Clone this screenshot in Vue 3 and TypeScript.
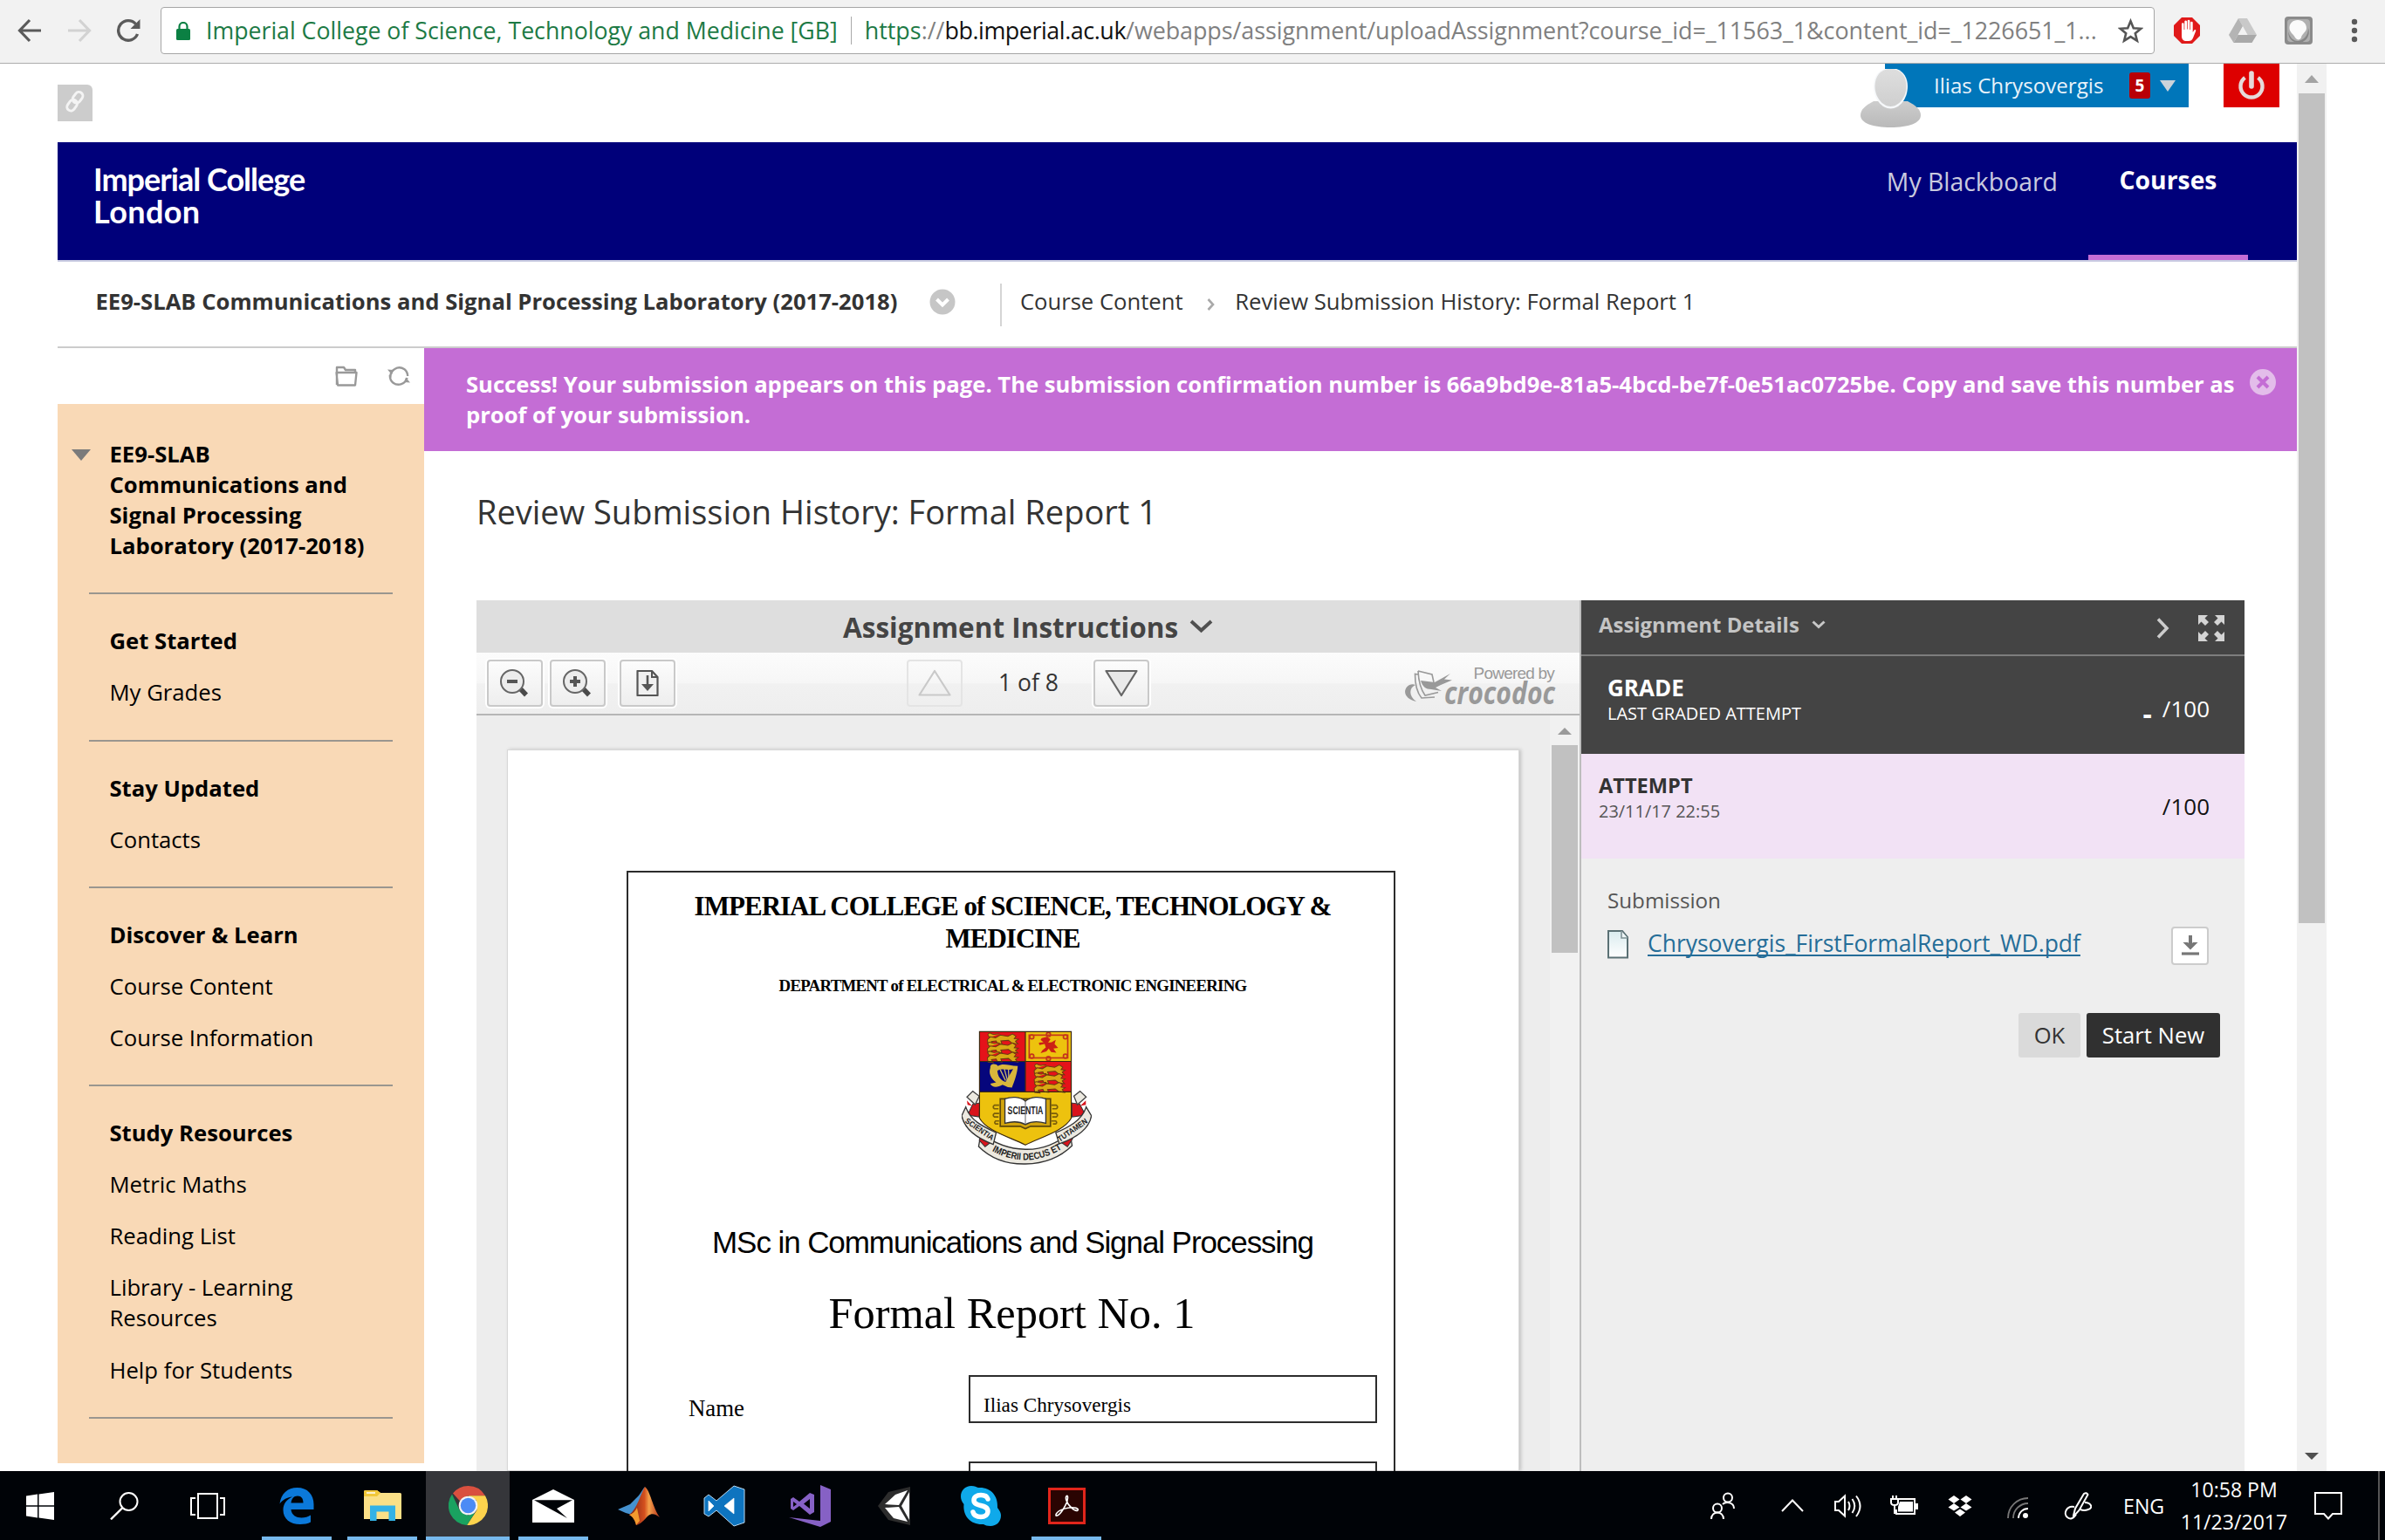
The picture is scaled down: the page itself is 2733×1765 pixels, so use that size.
<script setup lang="ts">
interface MenuSection {
  heading: string
  items: string[]
}

const sections: MenuSection[] = [
  { heading: 'Get Started', items: ['My Grades'] },
  { heading: 'Stay Updated', items: ['Contacts'] },
  { heading: 'Discover & Learn', items: ['Course Content', 'Course Information'] },
  {
    heading: 'Study Resources',
    items: ['Metric Maths', 'Reading List', 'Library - Learning Resources', 'Help for Students'],
  },
]

const lionRows = [0, 1, 2]
</script>

<template>
  <div class="screen">
    <header class="browser">
      <svg class="nav-back" width="28" height="28" viewBox="0 0 28 28"><path d="M27 14H3M14 2L2.500 14L14 26" fill="none" stroke="#5a5a5a" stroke-width="3.200" /></svg>
      <svg class="nav-forward" width="28" height="28" viewBox="0 0 28 28"><path d="M1 14H25M14 2L25.500 14L14 26" fill="none" stroke="#d2d2d2" stroke-width="3.200" /></svg>
      <svg class="nav-reload" width="28" height="28" viewBox="0 0 28 28"><path d="M24.500 18A11.300 11.300 0 1 1 22.500 6.500" fill="none" stroke="#5a5a5a" stroke-width="3.400" /><path d="M27.500 1V12H16.500Z" fill="#5a5a5a" /></svg>
      <div class="omnibox">
        <svg class="lock" width="16" height="21" viewBox="0 0 16 21"><rect y="8" width="16" height="13" rx="1.500" fill="#0b8043" /><path d="M3.500 9V5.500a4.500 4.500 0 0 1 9 0V9" fill="none" stroke="#0b8043" stroke-width="2.200" /></svg>
        <span class="owner">Imperial College of Science, Technology and Medicine [GB]</span>
        <span class="bar"></span>
        <span class="url"><span class="secure">https</span><span class="rest">://</span><span class="host">bb.imperial.ac.uk</span><span class="path">/webapps/assignment/uploadAssignment?course_id=_11563_1&amp;content_id=_1226651_1...</span></span>
        <svg class="star" width="29" height="29" viewBox="0 0 29 29"><path d="M14.500 3.200L17.800 11.200L26.300 11.800L19.800 17.300L21.900 25.700L14.500 21.100L7.100 25.700L9.200 17.300L2.700 11.800L11.200 11.200Z" fill="none" stroke="#555" stroke-width="2.600" /></svg>
      </div>
      <svg class="ext abp" width="30" height="30" viewBox="0 0 30 30">
        <path d="M9 0H21L30 9V21L21 30H9L0 21V9Z" fill="#e01a1a" />
        <path d="M9 17V7.500a1.300 1.300 0 0 1 2.600 0V14h.7V4.500a1.400 1.400 0 0 1 2.700 0V13.500h.7V3.800a1.400 1.400 0 0 1 2.700 0V14h.7V6a1.300 1.300 0 0 1 2.600 0V17l1.500-2.300c1-1.300 2.400-.7 2 .7L22 23.500C21 26 19.500 27 17 27H14.500C11 27 9 25 9 21Z" fill="#fff" />
      </svg>
      <svg class="ext drive" width="32" height="28" viewBox="0 0 32 28">
        <path d="M11 0H21L32 19H21.500Z" fill="#c9c9c9" /><path d="M11 0L16 9L5.500 28L0 19Z" fill="#b4b4b4" /><path d="M10.500 19H32L26.500 28H5.500Z" fill="#a9a9a9" /><path d="M16 9.500L21.300 19H10.700Z" fill="#f2f2f2" />
      </svg>
      <svg class="ext shield" width="32" height="32" viewBox="0 0 32 32">
        <rect width="32" height="32" rx="4" fill="#8b8b8b" /><rect x="3" y="3" width="26" height="26" rx="4" fill="#b0b0b0" />
        <path d="M4 17C6 24 10 28 15 28C22 27 27 22 27 13C30 22 24 30 16 30C9 30 4 25 4 17Z" fill="#868686" />
        <path d="M15 4C21 4 25 8 25 13C25 18 20 19 19 24C18 27 14 27.500 12 24C10 20 5.500 18 5.500 13C5.500 8 9 4 15 4Z" fill="#fbfbfb" />
      </svg>
      <svg class="dots" width="8" height="28" viewBox="0 0 8 28"><circle cx="4" cy="4" r="3.200" fill="#5a5a5a" /><circle cx="4" cy="14" r="3.200" fill="#5a5a5a" /><circle cx="4" cy="24" r="3.200" fill="#5a5a5a" /></svg>
    </header>

    <main class="viewport">
      <div class="document">
        <div class="topstrip">
          <span class="permalink">
            <svg width="40" height="42" viewBox="0 0 40 42"><g fill="none" stroke="#f4f4f4" stroke-width="3" transform="rotate(36 20 19)"><rect x="15.500" y="7" width="9" height="13.500" rx="4.500" /><rect x="15.500" y="18" width="9" height="13.500" rx="4.500" /></g></svg>
          </span>
          <div class="user">
            <svg class="avatar" width="69" height="67" viewBox="0 0 69 67">
              <defs>
                <linearGradient id="face" x1="0" y1="0" x2="0" y2="1"><stop offset="0" stop-color="#dedede" /><stop offset="1" stop-color="#cfcfcf" /></linearGradient>
                <linearGradient id="bust" x1="0" y1="0" x2="0" y2="1"><stop offset="0" stop-color="#cdcdcd" /><stop offset="1" stop-color="#b9b9b9" /></linearGradient>
              </defs>
              <path d="M15 37C5 42 0 47 0 53C0 62 14 67 34.500 67S69 62 69 53C69 47 64 42 54 37Z" fill="url(#bust)" />
              <path d="M34.500 -1C22 -1 15 8 15 20C15 34 24 45.500 34.500 45.500S54 34 54 20C54 8 47 -1 34.500 -1Z" fill="#f6f8fa" />
              <path d="M34.500 0C23 0 16.500 8 16.500 20C16.500 32 25 43 34.500 43S52.500 32 52.500 20C52.500 8 46 0 34.500 0Z" fill="url(#face)" />
            </svg>
            <span class="username">Ilias Chrysovergis</span>
            <span class="badge">5</span>
            <svg class="drop" width="18" height="13" viewBox="0 0 18 13"><path d="M0 0H18L9 13Z" fill="#ccd3da" /></svg>
          </div>
          <span class="power"><svg width="32" height="34" viewBox="0 0 32 34"><path d="M8.500 8A12.500 12.500 0 1 0 23.500 8" fill="none" stroke="#e6d9d9" stroke-width="4.400" /><path d="M16 3V18" stroke="#e6d9d9" stroke-width="5.600" stroke-linecap="round" /></svg></span>
        </div>

        <div class="banner">
          <div class="logo"><span>Imperial College</span><span class="logo-city">London</span></div>
          <nav class="tabs">
            <span class="tab">My Blackboard</span>
            <span class="tab active">Courses</span>
          </nav>
        </div>

        <div class="crumbs">
          <b class="course">EE9-SLAB Communications and Signal Processing Laboratory (2017-2018)</b>
          <svg class="more" width="30" height="30" viewBox="0 0 30 30"><circle cx="15" cy="15" r="14.500" fill="#c6c6c6" /><path d="M8.500 12L15 18.500L21.500 12" fill="none" stroke="#fff" stroke-width="4" /></svg>
          <span class="rule"></span>
          <span class="crumb">Course Content</span>
          <svg class="sep" width="9" height="14" viewBox="0 0 9 14"><path d="M1.500 1L7 7L1.500 13" fill="none" stroke="#a9a9a9" stroke-width="2.600" /></svg>
          <span class="crumb here">Review Submission History: Formal Report 1</span>
        </div>

        <div class="columns">
          <aside class="sidebar">
            <div class="side-tools">
              <svg width="26" height="24" viewBox="0 0 26 24"><path d="M2 22V2H10L12 5H23V8M1.500 8H24.500L23 22.500H3Z" fill="none" stroke="#999" stroke-width="2.400" stroke-linejoin="round" /></svg>
              <svg width="26" height="24" viewBox="0 0 26 24"><path d="M3.500 14A10.200 10.200 0 0 1 19.500 4.300Q23 7 23.200 12M22.500 14A10.200 10.200 0 0 1 6.500 19.700Q2.800 17 2.800 11" fill="none" stroke="#999" stroke-width="2.400" /><path d="M0 4.500L7 5L5 10.500ZM26 19.500L19 19L21 13.500Z" fill="#999" /></svg>
            </div>
            <div class="menu">
              <div class="menu-title">
                <svg class="caret" width="22" height="13" viewBox="0 0 22 13"><path d="M0 0H22L11 13Z" fill="#7b7b7b" /></svg>
                <span class="menu-heading">EE9-SLAB<br />Communications and<br />Signal Processing<br />Laboratory (2017-2018)</span>
              </div>
              <section v-for="section in sections" :key="section.heading" class="menu-section">
                <span class="menu-heading">{{ section.heading }}</span>
                <span v-for="item in section.items" :key="item" class="menu-item">{{ item }}</span>
              </section>
            </div>
          </aside>

          <div class="content">
            <div class="alert">
              <p>Success! Your submission appears on this page. The submission confirmation number is 66a9bd9e-81a5-4bcd-be7f-0e51ac0725be. Copy and save this number as<br />proof of your submission.</p>
              <svg class="dismiss" width="32" height="32" viewBox="0 0 32 32"><circle cx="16" cy="16" r="15" fill="#e3bdea" /><path d="M10 10L22 22M22 10L10 22" stroke="#c46dd5" stroke-width="4" /></svg>
            </div>
            <h1>Review Submission History: Formal Report 1</h1>

            <div class="grader">
              <div class="viewer">
                <div class="viewer-head">
                  <span>Assignment Instructions</span>
                  <svg width="27" height="16" viewBox="0 0 27 16"><path d="M2 2L13.500 12.500L25 2" fill="none" stroke="#505050" stroke-width="4" /></svg>
                </div>
                <div class="toolbar">
                  <span class="tool zoom-out">
                    <svg width="34" height="34" viewBox="0 0 34 34"><path d="M22 22L30 30.500" stroke="#4a4a4a" stroke-width="5.500" /><circle cx="14" cy="15" r="13" fill="#ececec" stroke="#666" stroke-width="2" /><path d="M8 15H20" stroke="#555" stroke-width="4" /></svg>
                  </span>
                  <span class="tool zoom-in">
                    <svg width="34" height="34" viewBox="0 0 34 34"><path d="M22 22L30 30.500" stroke="#4a4a4a" stroke-width="5.500" /><circle cx="14" cy="15" r="13" fill="#ececec" stroke="#666" stroke-width="2" /><path d="M8 15H20M14 9V21" stroke="#555" stroke-width="4" /></svg>
                  </span>
                  <span class="tool save">
                    <svg width="26" height="30" viewBox="0 0 26 30"><path d="M1.500 1H18L24.500 8V29H1.500Z" fill="#f0f0f0" stroke="#555" stroke-width="2.200" stroke-linejoin="round" /><path d="M18 1V8H24.500" fill="none" stroke="#555" stroke-width="2" /><path d="M13 6V18" stroke="#555" stroke-width="2.600" /><path d="M6 16H20L13 24Z" fill="#555" /></svg>
                  </span>
                  <span class="tool prev">
                    <svg width="38" height="32" viewBox="0 0 38 32"><path d="M19 2L36.500 29.500H1.500Z" fill="none" stroke="#c9c9c9" stroke-width="2.200" stroke-linejoin="round" /></svg>
                  </span>
                  <span class="pages">1 of 8</span>
                  <span class="tool next">
                    <svg width="38" height="32" viewBox="0 0 38 32"><path d="M19 30L1.500 2H36.500Z" fill="#e9e9e9" stroke="#666" stroke-width="2.200" stroke-linejoin="round" /></svg>
                  </span>
                  <div class="brand">
                    <svg class="croc" width="54" height="37" viewBox="0 0 54 37">
                      <path d="M13 36C2 34 -3 26 2 19.500C5 16 9 15.500 12 17C5 20 3.500 29 13 36Z" fill="#999" />
                      <path d="M15 1L31 5L33 14M15 1C15.500 12 18 22 23 29L38 25.500M15 5L11.500 4.500C11.500 16 14 26 19 32L34 31" fill="none" stroke="#999" stroke-width="1.600" />
                      <path d="M18 12L34 14L52 4L45 10.500L54 11.500L41 17L35 20L42 24L30 22C24 22 20 19 18 12Z" fill="#999" />
                    </svg>
                    <div class="brand-text"><span class="powered">Powered by</span><span class="crocodoc">crocodoc</span></div>
                  </div>
                </div>
                <div class="canvas">
                  <div class="sheet">
                    <div class="frame">
                      <div class="college">IMPERIAL COLLEGE of SCIENCE, TECHNOLOGY &amp;<br />MEDICINE</div>
                      <div class="department">DEPARTMENT of ELECTRICAL &amp; ELECTRONIC ENGINEERING</div>
                      <svg class="crest" width="149" height="154" viewBox="0 0 445 460">
                        <defs>
                          <path id="lion" d="M0 22L10 12L28 15L44 6L70 10L86 2L98 10L92 18L106 20L96 27L104 36L84 33L72 24L46 26L50 36L34 34L30 26L14 28L20 38L2 36ZM8 14C-6 2 6 -4 16 2C24 6 30 0 42 2" />
                          <path id="ribbon-left" d="M10 314L112 384" />
                          <path id="ribbon-mid" d="M80 398Q218 490 358 396" />
                          <path id="ribbon-right" d="M336 382L440 310" />
                        </defs>
                        <path d="M18 240L60 285L52 262L20 255ZM425 240L378 285L388 262L425 255Z" fill="#d8141c" />
                        <path d="M20 290L38 252L62 248L60 296ZM424 290L404 252L376 248L378 296Z" fill="#d8141c" stroke="#333" stroke-width="3" />
                        <path d="M18 228L38 208L60 225L46 254ZM426 228L405 208L384 225L396 254Z" fill="#ece9e0" stroke="#444" stroke-width="4" />
                        <path d="M66 352Q136 405 218 407T370 350L378 394Q316 455 218 457T58 397Z" fill="#ece9e0" stroke="#333" stroke-width="4" />
                        <path d="M70 350L98 384L80 398L60 376ZM370 348L342 384L362 398L380 370Z" fill="#d8141c" stroke="#333" stroke-width="3" />
                        <path d="M14 262C30 310 75 330 118 350L108 390C60 372 10 340 0 292ZM426 262C412 308 365 332 322 350L334 388C385 370 436 340 444 292Z" fill="#ece9e0" stroke="#333" stroke-width="4" />
                        <path d="M61 4H375V300C350 345 270 365 218 392C165 365 86 345 61 300Z" fill="#edc20e" />
                        <rect x="61" y="4" width="157" height="102" fill="#e5121a" />
                        <rect x="218" y="106" width="157" height="104" fill="#e5121a" />
                        <rect x="61" y="106" width="157" height="104" fill="#06067c" />
                        <rect x="231" y="16" width="132" height="78" fill="none" stroke="#c4351c" stroke-width="5" />
                        <g fill="none" stroke="#c4351c" stroke-width="5"><circle cx="240" cy="22" r="7" /><circle cx="297" cy="14" r="7" /><circle cx="355" cy="22" r="7" /><circle cx="240" cy="88" r="7" /><circle cx="297" cy="96" r="7" /><circle cx="355" cy="88" r="7" /></g>
                        <path d="M274 26L292 22L304 30L296 42L308 40L322 32L318 46L330 60L314 62L324 76L306 74L298 62L290 72L270 78L276 68L288 58L284 46L266 50L264 42L280 40L270 32Z" fill="#cc2015" />
                        <g v-for="n in lionRows" :key="n" fill="#d9a913" stroke="#6b3a10" stroke-width="3">
                          <use href="#lion" x="88" :y="10 + n * 31" />
                          <use href="#lion" x="248" :y="116 + n * 30" />
                        </g>
                        <path d="M98 128C96 112 118 112 124 122C140 110 160 120 192 122C190 150 180 175 172 196L158 194L140 186C122 196 104 196 98 182L118 178C98 164 92 146 98 128ZM122 138C124 160 134 170 150 176L176 132C160 138 140 128 122 138Z" fill="#d9b63b" />
                        <path d="M132 134L150 172M146 132L158 176M160 134L162 178" stroke="#c9b868" stroke-width="4" />
                        <path d="M61 4H375V300C350 345 270 365 218 392C165 365 86 345 61 300ZM218 4V210M61 106H375M61 210H375" fill="none" stroke="#3c2a10" stroke-width="3.500" />
                        <path d="M132 234H304V328H236L218 336L200 328H132Z" fill="#d2a40d" stroke="#5c470c" stroke-width="5" />
                        <path d="M218 242C200 226 170 226 148 234V318C176 310 200 312 218 322C236 312 262 310 288 318V234C266 226 238 226 218 242Z" fill="#fff" stroke="#333" stroke-width="4" />
                        <path d="M218 242V320" stroke="#666" stroke-width="3" />
                        <g fill="none" stroke="#7a5e0a" stroke-width="5"><path d="M128 256H112q-8 6 0 12h14M128 284H112q-8 6 0 12h14M128 310H116q-6 6 0 10h10M306 256h18q8 6 0 12h-14M306 284h18q8 6 0 12h-14M306 310h16q6 6 0 10h-10" /></g>
                        <text x="218" y="286" class="crest-book" text-anchor="middle" textLength="122" lengthAdjust="spacingAndGlyphs">SCIENTIA</text>
                        <text class="crest-ribbon"><textPath href="#ribbon-left" textLength="112" lengthAdjust="spacingAndGlyphs">SCIENTIA</textPath></text>
                        <text class="crest-ribbon big"><textPath href="#ribbon-mid" startOffset="28" textLength="252" lengthAdjust="spacingAndGlyphs">IMPERII DECUS ET</textPath></text>
                        <text class="crest-ribbon"><textPath href="#ribbon-right" textLength="118" lengthAdjust="spacingAndGlyphs">TUTAMEN</textPath></text>
                      </svg>
                      <div class="msc">MSc in Communications and Signal Processing</div>
                      <div class="report">Formal Report No. 1</div>
                      <div class="field">
                        <span class="field-label">Name</span>
                        <span class="field-box">Ilias Chrysovergis</span>
                      </div>
                      <div class="field next-field"><span class="field-label"></span><span class="field-box"></span></div>
                    </div>
                  </div>
                  <div class="inner-scroll">
                    <svg width="16" height="8" viewBox="0 0 16 8"><path d="M8 0L16 8H0Z" fill="#9a9a9a" /></svg>
                    <span class="inner-thumb"></span>
                  </div>
                </div>
              </div>

              <div class="details">
                <div class="details-head">
                  <span class="details-title">Assignment Details</span>
                  <svg class="d-chev" width="16" height="10" viewBox="0 0 16 10"><path d="M1.500 1.500L8 7.500L14.500 1.500" fill="none" stroke="#c8c8c8" stroke-width="3" /></svg>
                  <svg class="d-next" width="15" height="24" viewBox="0 0 15 24"><path d="M2 1.500L12 12L2 22.500" fill="none" stroke="#ccc" stroke-width="3.600" /></svg>
                  <svg class="d-full" width="30" height="30" viewBox="0 0 30 30">
                    <path d="M0 0H11L7.500 3.500L12 8L8 12L3.500 7.500L0 11ZM30 0V11L26.500 7.500L22 12L18 8L22.500 3.500L19 0ZM0 30V19L3.500 22.500L8 18L12 22L7.500 26.500L11 30ZM30 30H19L22.500 26.500L18 22L22 18L26.500 22.500L30 19Z" fill="#d4d4d4" />
                  </svg>
                </div>
                <div class="grade">
                  <div class="grade-text"><b>GRADE</b><small>LAST GRADED ATTEMPT</small></div>
                  <span class="dash">-</span>
                  <span class="score">/100</span>
                </div>
                <div class="attempt">
                  <div class="attempt-text"><b>ATTEMPT</b><small>23/11/17 22:55</small></div>
                  <span class="score">/100</span>
                </div>
                <div class="submission">
                  <span class="sub-label">Submission</span>
                  <div class="file">
                    <svg class="file-icon" width="28" height="33" viewBox="0 0 28 33"><defs><linearGradient id="leaf" x1="0" y1="0" x2="0" y2="1"><stop offset="0" stop-color="#d9ebee" /><stop offset="1" stop-color="#fff" /></linearGradient></defs><path d="M3 1H19L25 8V31.500H3Z" fill="url(#leaf)" stroke="#5a7074" stroke-width="2" /><path d="M18 1V9H25" fill="#eef6f7" stroke="#7f9296" stroke-width="1.600" /></svg>
                    <a class="file-link">Chrysovergis_FirstFormalReport_WD.pdf</a>
                    <span class="download"><svg width="20" height="23" viewBox="0 0 20 23"><path d="M10 0V11" stroke="#777" stroke-width="4" /><path d="M1.500 8H7L10 11L13 8H18.500L10 16.500Z" fill="#777" /><path d="M0 21H20" stroke="#777" stroke-width="3.200" /></svg></span>
                  </div>
                  <div class="actions"><span class="btn ok">OK</span><span class="btn start">Start New</span></div>
                </div>
              </div>
            </div>
          </div>
        </div>
      </div>

      <div class="scrollbar">
        <svg class="arrow-up" width="16" height="9" viewBox="0 0 16 9"><path d="M8 0L16 9H0Z" fill="#a3a3a3" /></svg>
        <span class="thumb"></span>
        <svg class="arrow-down" width="16" height="8" viewBox="0 0 16 8"><path d="M0 0H16L8 8Z" fill="#505050" /></svg>
      </div>
    </main>

    <footer class="taskbar">
      <span class="task first"><svg width="32" height="32" viewBox="0 0 32 32"><path d="M0 4.500L13 2.600V15.300H0ZM14.500 2.400L32 0V15.300H14.500ZM0 16.800H13V29.400L0 27.600ZM14.500 16.800H32V32L14.500 29.600Z" fill="#fff" /></svg></span>
      <span class="task"><svg width="33" height="32" viewBox="0 0 33 32"><circle cx="21.500" cy="11" r="10" fill="none" stroke="#fff" stroke-width="2" /><path d="M14.500 18L1 31.300" stroke="#fff" stroke-width="2.400" /></svg></span>
      <span class="task"><svg width="40" height="30" viewBox="0 0 40 30"><path d="M9 1H31V29H9Z" fill="none" stroke="#fff" stroke-width="2" /><path d="M6 6H1V25H6M34 6H39V25H34" fill="none" stroke="#fff" stroke-width="2" /></svg></span>
      <span class="task run edge"><svg width="40" height="42" viewBox="0 0 40 42"><path d="M0.500 18.500C2 7 9.500 0 20.500 0C32.500 0 39.500 8 39.500 19V25H13.500C14 31.500 19.500 34.500 25.500 34.500C29.500 34.500 33 33.500 36 31.500V39.500C32.500 41.300 28.500 42 24 42C12.500 42 4.500 36 4.500 25.500C4.500 18.500 8.500 13.500 15 10.500C9.500 11 4 13.500 0.500 18.500ZM13.500 17.500H27.500C27.500 12.500 25.500 9.500 21 9.500C16.500 9.500 14 13 13.500 17.500Z" fill="#0b79da" /></svg></span>
      <span class="task run"><svg width="43" height="36" viewBox="0 0 43 36"><path d="M0 1.500Q0 0 1.500 0H15L19 3H41.500Q43 3 43 4.500V33H0Z" fill="#fbe087" /><path d="M0 1.500Q0 0 1.500 0H15L19 3L15 7H0Z" fill="#f2c83a" /><path d="M3 3H13" stroke="#fff" stroke-width="1.500" /><path d="M7 17.500H36V35H28.500V24.500H14.500V35H7Z" fill="#33b2e6" /></svg></span>
      <span class="task run current"><svg width="45" height="45" viewBox="0 0 45 45"><path d="M22.500 0A22.500 22.500 0 0 1 42 11.200H22.500L12.700 16.900L5 8.500A22.500 22.500 0 0 1 22.500 0Z" fill="#d9503f" /><path d="M42 11.200A22.500 22.500 0 0 1 21 45L32.300 28.100L32 16.500L22.500 11.200Z" fill="#fdd34d" /><path d="M4 9.500A22.500 22.500 0 0 0 21 45L30 31L22.500 33.800L12.700 28Z" fill="#1aa260" /><circle cx="22.500" cy="22.500" r="10.800" fill="#f3f3f3" /><circle cx="22.500" cy="22.500" r="8.700" fill="#4c8bf5" /></svg></span>
      <span class="task run"><svg width="48" height="38" viewBox="0 0 48 38"><path d="M0 12L24 0L48 12V38H0Z" fill="#fff" /><path d="M2 12.300H46L28 22L40 33Z" fill="#000307" /></svg></span>
      <span class="task"><svg width="48" height="44" viewBox="0 0 48 44"><defs><linearGradient id="peak" x1="0" y1="0" x2="1" y2="0"><stop offset="0" stop-color="#7a1f16" /><stop offset=".5" stop-color="#d4501e" /><stop offset=".65" stop-color="#f4a04a" /><stop offset="1" stop-color="#b5301a" /></linearGradient></defs><path d="M0 26L14 20L24 10C27 6 29 2 31 0C29 12 22 26 16 32L9 30Z" fill="#4591cf" /><path d="M31 0C37 4 40 24 48 35C43 31 39 30 35 33C30 38 26 43 21 44C20 39 18 35 13 32C22 26 26 8 31 0Z" fill="url(#peak)" /><path d="M13 32C17 31 20 28 22 24L25 39L21 44C20 39 17 34 13 32Z" fill="#f39a2e" /></svg></span>
      <span class="task"><svg width="48" height="48" viewBox="0 0 48 48"><path d="M35 1L47 5V43L35 47L15 29L6 36L1 33V15L6 11L15 18ZM35 15L24 24L35 33ZM6 18V30L12 24Z" fill="#0e74bf" fill-rule="evenodd" stroke="#b9d8ee" stroke-width="1" /><path d="M35 15L24 24L35 33ZM6 18V30L12 24Z" fill="#fff" /></svg></span>
      <span class="task"><svg width="48" height="48" viewBox="0 0 48 48"><path d="M36 0L48 5V42L36 48L0 37L36 41Z" fill="#8661c5" /><path d="M24 9L29 11V31L24 34L12 24L5 29L2 27V16L5 14L12 19ZM24 16L17 21.500L24 27ZM5 19V25L9 22Z" fill="#8661c5" fill-rule="evenodd" /></svg></span>
      <span class="task"><svg width="40" height="44" viewBox="0 0 40 44"><path d="M0 22L12 6L37 0V44L12 38Z" fill="#2c2c2c" /><path d="M8 20L20 9L34 4L24 21ZM8 24L24 23L34 40L18 36ZM27 22L36 6V38Z" fill="#fff" /></svg></span>
      <span class="task"><svg width="46" height="46" viewBox="0 0 46 46"><path d="M12 0C16 0 18 1.500 20 2C34 1 43 11 42 25C45 29 46 31 46 34C46 41 41 46 34 46C30 46 28 45 26 44C12 45 2 35 3.500 21C1 18 0 15 0 12C0 5 5 0 12 0Z" fill="#0fa9ea" /><path d="M31 15C30 11.500 27 10.500 23 10.500C18 10.500 15 13 15 16.500C15 25 31 20 31 29C31 33 27.500 35.500 23 35.500C18.500 35.500 15 34 14 30" fill="none" stroke="#fff" stroke-width="5.500" stroke-linecap="round" /></svg></span>
      <span class="task run"><svg width="43" height="42" viewBox="0 0 43 42"><rect x="1.500" y="1.500" width="40" height="39" fill="#2a0402" stroke="#e1251b" stroke-width="3" /><path d="M9 31C10 27 17 24 24 23C30 22 36 24 34 26C31 28 22 20 20.500 13C20 9 23 8 22.500 12C22 19 14 31 10.500 32C9 32.500 8.800 32 9 31Z" fill="none" stroke="#fff" stroke-width="1.600" /></svg></span>

      <div class="tray">
        <svg class="t-people" width="28" height="31" viewBox="0 0 28 31"><g fill="none" stroke="#fff" stroke-width="2"><circle cx="20" cy="6.500" r="5" /><path d="M14 14C17 11 27 11 27 19" /><circle cx="8" cy="18.500" r="5" /><path d="M1 31C1 21 15 21 15 31" /></g></svg>
        <svg class="t-caret" width="26" height="15" viewBox="0 0 26 15"><path d="M1 14L13 1.500L25 14" fill="none" stroke="#fff" stroke-width="2" /></svg>
        <svg class="t-volume" width="34" height="28" viewBox="0 0 34 28"><g fill="none" stroke="#fff" stroke-width="2"><path d="M1 9H5L12 2.500V25.500L5 19H1Z" /><path d="M16 9Q19 14 16 19M20.500 6Q26 14 20.500 22M25 2.500Q34 14 25 26" /></g></svg>
        <svg class="t-battery" width="32" height="24" viewBox="0 0 32 24"><path d="M10 4H28V21H7V16" fill="none" stroke="#fff" stroke-width="2" /><path d="M11 7H26V18.500H9V13ZM29 9H32V16H29Z" fill="#fff" /><path d="M1 4H9V8Q9 11 5 11T1 8ZM3 0V4M7 0V4M5 11V21" fill="none" stroke="#fff" stroke-width="2" /></svg>
        <svg class="t-dropbox" width="28" height="24" viewBox="0 0 28 24"><path d="M7 0L13.500 4.500L7 9L0.500 4.500ZM21 0L27.500 4.500L21 9L14.500 4.500ZM7 9L13.500 13.500L7 17.500L0.500 13.500ZM21 9L27.500 13.500L21 17.500L14.500 13.500ZM14 15.500L20 19.500L14 24L8 19.500Z" fill="#fff" /></svg>
        <svg class="t-wifi" width="24" height="24" viewBox="0 0 24 24"><g fill="none" stroke-width="1.800"><path d="M1 24A23 23 0 0 1 24 1" stroke="#777" /><path d="M7 24A17 17 0 0 1 24 7" stroke="#777" /><path d="M13 24A11 11 0 0 1 24 13" stroke="#fff" /></g><circle cx="21" cy="21" r="3" fill="#fff" /></svg>
        <svg class="t-pen" width="32" height="32" viewBox="0 0 32 32"><g fill="none" stroke="#fff" stroke-width="2"><path d="M11 27L13 19L23 2Q26 0 27.500 3L17.500 21L11 28Z" /><path d="M12 17C3 15 -1 25 4 29Q9 33 14 26M24 12C31 12 34 18 28 20Q23 22 19 20" /></g></svg>
        <span class="lang">ENG</span>
        <span class="clock">10:58 PM<br />11/23/2017</span>
        <svg class="t-note" width="32" height="32" viewBox="0 0 32 32"><path d="M1 1H31V25H21L16 30.500L11 25H1Z" fill="none" stroke="#fff" stroke-width="2" /></svg>
        <span class="peek"></span>
      </div>
    </footer>
  </div>
</template>

<style>
body { background: #fff; }
</style>

<style scoped>
.screen {
  width: 2733px;
  height: 1765px;
  overflow: hidden;
  display: flex;
  flex-direction: column;
  font-family: "Open Sans", "Noto Sans", sans-serif;
  font-size: 25.650px;
  line-height: 35.100px;
  color: #333;
  white-space: nowrap;
}
svg { display: block; flex: none; }

/* Browser chrome */
.browser {
  flex: none;
  box-sizing: border-box;
  height: 73px;
  padding-bottom: 2px;
  display: flex;
  align-items: center;
  background: #f2f2f2;
  border-bottom: 1px solid #adadad;
}
.nav-back { margin-left: 20px; }
.nav-forward { margin-left: 29px; }
.nav-reload { margin-left: 28px; }
.omnibox {
  box-sizing: border-box;
  width: 2285px;
  height: 54px;
  margin-left: 23px;
  display: flex;
  align-items: center;
  background: #fff;
  border: 1px solid #a6a6a6;
  border-radius: 4px;
  font-size: 26.900px;
}
.lock { margin-left: 17px; }
.owner { margin-left: 18px; color: #1d7a45; font-size: 26.700px; }
.bar { width: 1px; height: 32px; margin-left: 15px; background: #aaa; }
.url { margin-left: 15px; color: #808080; }
.secure { color: #1d7a45; }
.host { color: #111; letter-spacing: -0.450px; }
.path { letter-spacing: -0.060px; }
.star { margin-left: 24px; }
.abp { margin-left: 22px; }
.drive { margin-left: 33px; }
.shield { margin-left: 32px; }
.dots { margin-left: 44px; }

/* Page area */
.viewport { flex: 1; min-height: 0; display: flex; overflow: hidden; }
.document { flex: none; width: 2632px; box-sizing: border-box; padding-left: 66px; display: flex; flex-direction: column; }
.topstrip { flex: none; height: 90px; display: flex; align-items: flex-start; }
.permalink { width: 40px; height: 42px; margin-top: 24px; background: #ccc; border-top-right-radius: 6px; }
.user {
  position: relative;
  box-sizing: border-box;
  width: 348px;
  height: 50px;
  margin-left: auto;
  padding-left: 56px;
  display: flex;
  align-items: center;
  background: #0076ba;
  color: #e9f3fa;
  font-size: 24.160px;
}
.avatar { position: absolute; left: -28px; top: 6px; }
.badge {
  width: 24px;
  height: 30px;
  margin-left: 29.500px;
  background: #b80006;
  border-radius: 3px;
  color: #fff;
  font-size: 19px;
  font-weight: 700;
  line-height: 30px;
  text-align: center;
}
.drop { margin-left: 11px; }
.power { width: 64px; height: 50px; margin: 0 20px 0 40px; display: flex; align-items: center; justify-content: center; background: #dd0000; }

.banner { flex: none; height: 135px; display: flex; background: #00007a; border-bottom: 2px solid #c9cbe2; }
.logo { padding: 24px 0 0 41px; display: flex; flex-direction: column; font: 700 36px/37px Lato, sans-serif; letter-spacing: -0.980px; color: #fff; }
.logo-city { letter-spacing: 0.400px; }
.tabs { margin: 0 56px 0 auto; display: flex; }
.tab { padding-top: 24.500px; color: #c9cadf; font-size: 28.400px; line-height: 40px; }
.tab.active {
  box-sizing: border-box;
  width: 183px;
  margin-left: 35px;
  padding-top: 22.500px;
  border-bottom: 6px solid #c46dd5;
  color: #fff;
  font-size: 28.300px;
  font-weight: 700;
  text-align: center;
}

.crumbs {
  flex: none;
  box-sizing: border-box;
  height: 99px;
  padding: 0 0 6px 43.500px;
  display: flex;
  align-items: center;
  border-bottom: 2px solid #ccc;
}
.course { font-size: 25.630px; }
.more { margin-left: 37px; }
.rule { width: 2px; height: 49px; margin: 7px 0 0 51px; background: #d5d5d5; }
.crumb { margin-left: 20.500px; }
.sep { margin: 7px 0 0 27.500px; }
.crumb.here { margin-left: 23px; font-size: 25.700px; }

.columns { flex: 1; min-height: 0; display: flex; align-items: flex-start; }

/* Course menu */
.sidebar { flex: none; width: 420px; color: #000; }
.side-tools { box-sizing: border-box; height: 64px; padding: 20px 16px 0 0; display: flex; justify-content: flex-end; gap: 34px; }
.menu { box-sizing: border-box; height: 1214px; padding: 40px 36px 0; background: #f9d9b6; }
.menu-heading { font-weight: 700; font-size: 25.650px; }
.menu-title { display: flex; padding: 0 0 36px; border-bottom: 2px solid #9a968f; }
.menu-title .caret { margin: 12px 21.500px 0 -20px; }
.menu-section {
  padding: 36px 0 36px 23.500px;
  display: flex;
  flex-direction: column;
  gap: 24px;
  border-bottom: 2px solid #9a968f;
}
.menu-item { width: 240px; white-space: normal; font-size: 25.700px; }

/* Main column */
.content { flex: none; width: 2146px; }
.alert { box-sizing: border-box; height: 118px; padding: 24px 0 0 48px; display: flex; background: #c46dd5; color: #fff; }
.alert p { margin: 0; font-weight: 700; font-size: 25.620px; }
.dismiss { margin: -1.500px 0 0 16px; }
h1 { margin: 42.700px 0 0 60px; font-size: 38px; font-weight: 400; line-height: 52px; }
.grader { width: 2026px; height: 998px; margin: 76.300px 0 0 60px; display: flex; }

.viewer { flex: none; width: 1264px; display: flex; flex-direction: column; }
.viewer-head {
  flex: none;
  height: 60px;
  padding-left: 420px;
  display: flex;
  align-items: center;
  background: #dedede;
  color: #444;
  font-size: 31.500px;
  font-weight: 700;
}
.viewer-head span { padding-top: 1px; }
.viewer-head svg { margin-left: 13px; }
.toolbar {
  flex: none;
  box-sizing: border-box;
  height: 72px;
  padding: 8px 0 0 12px;
  display: flex;
  align-items: flex-start;
  background: linear-gradient(#fcfcfc, #f6f6f6 50%, #f1f1f1 51%, #eeeeee);
  border-bottom: 2px solid #b6b6b6;
}
.tool {
  box-sizing: border-box;
  width: 64px;
  height: 54px;
  display: flex;
  align-items: center;
  justify-content: center;
  background: linear-gradient(#fcfcfc, #eeeeee);
  border: 2px solid #c9c9c9;
  border-radius: 4px;
  box-shadow: 0 0 0 2px #fff;
}
.zoom-in { margin-left: 8px; }
.save { margin-left: 16px; }
.prev { margin-left: 265px; background: none; border-color: #e4e4e4; box-shadow: none; }
.pages { margin: 8px 0 0 41px; color: #333; font-size: 26.500px; line-height: 36px; }
.next { margin-left: 40px; }
.brand { margin: 4px 0 0 293px; display: flex; color: #999; }
.croc { margin-top: 8px; }
.brand-text { margin: 2px 0 0 -9px; width: 126px; display: flex; flex-direction: column; }
.powered { align-self: flex-end; font: 19px/20px "Liberation Sans", sans-serif; letter-spacing: -0.800px; }
.crocodoc { margin-top: -7px; font-size: 36.500px; font-style: italic; font-weight: 700; line-height: 36px; transform: scaleX(0.825); transform-origin: left; }

.canvas { flex: 1; min-height: 0; display: flex; overflow: hidden; background: #ededed; }
.sheet {
  box-sizing: border-box;
  width: 1160px;
  margin: 39px 0 0 35px;
  padding: 138px 0 0 136px;
  background: #fff;
  border: 1px solid #d8d8d8;
  box-shadow: 2px 0 4px #c2c2c2;
}
.frame { box-sizing: border-box; width: 881px; height: 900px; padding-top: 21.500px; border: 2px solid #2c2c2c; color: #000; }
.college { margin-left: 4px; font: 700 31px/36.200px "Liberation Serif", serif; letter-spacing: -0.980px; text-align: center; }
.department { margin: 24px 0 0 4px; font: 700 18.800px/24px "Liberation Serif", serif; letter-spacing: -0.720px; text-align: center; }
.crest { margin: 39px 0 0 382px; }
.crest-book { font: 700 36px "Liberation Sans", sans-serif; fill: #222; }
.crest-ribbon { font: 700 27px "Liberation Sans", sans-serif; fill: #222; }
.crest-ribbon.big { font-size: 33px; }
.msc { margin: 69.500px 0 0 4px; font: 35px/40px "Liberation Sans", sans-serif; letter-spacing: -1.080px; text-align: center; }
.report { margin: 31px 0 0 2px; font: 50.400px/60px "Liberation Serif", serif; text-align: center; }
.field { height: 55px; margin-top: 41px; display: flex; }
.field-label { width: 321px; padding: 22.500px 0 0 69px; font: 26.800px/30px "Liberation Serif", serif; }
.field-box { box-sizing: border-box; width: 468px; height: 55px; padding: 18.500px 0 0 15px; border: 2px solid #2c2c2c; font: 23.200px/27px "Liberation Serif", serif; }
.next-field { margin-top: 44px; }
.inner-scroll { width: 34px; margin-left: auto; display: flex; flex-direction: column; align-items: center; background: #f1f1f1; }
.inner-scroll svg { margin-top: 14px; }
.inner-thumb { width: 30px; height: 238px; margin-top: 12px; background: #c1c1c1; }

/* Assignment details */
.details { flex: none; box-sizing: border-box; width: 762px; border-left: 2px solid #bdbdbd; background: #eee; }
.details-head { box-sizing: border-box; height: 64px; padding: 0 23px 6px 20px; display: flex; align-items: center; background: #444; border-bottom: 2px solid #7e7e7e; color: #c4c4c4; }
.details-title { font-size: 23.920px; font-weight: 700; }
.d-chev { margin-left: 14px; }
.d-next { margin: 8px 1px 0 auto; }
.d-full { margin: 8px 0 0 32px; }
.grade, .attempt { box-sizing: border-box; display: flex; align-items: flex-start; }
.grade { height: 112px; padding: 19.500px 40px 0 30px; background: #444; color: #fff; }
.grade-text, .attempt-text { display: flex; flex-direction: column; margin-right: auto; }
.grade b { font-size: 26px; line-height: 34px; }
.grade small { font-size: 20px; line-height: 26px; }
.dash { margin: 29px 12px 0 0; font-size: 32px; font-weight: 700; line-height: 36px; }
.score { margin-top: 23px; font-size: 26px; line-height: 36px; }
.attempt { height: 120px; padding: 19.500px 40px 0 20px; background: #f2e2f5; color: #333; }
.attempt b { font-size: 23.600px; line-height: 34px; }
.attempt small { font-size: 19.950px; line-height: 26px; color: #555; }
.attempt .score { color: #111; }
.submission { padding: 31.500px 0 0 28px; }
.sub-label { display: block; margin-left: 2px; color: #555; font-size: 24.200px; line-height: 34px; }
.file { height: 44px; margin-top: 12.500px; display: flex; }
.file-icon { margin-top: 4px; }
.file-link { margin: 1.500px 0 0 20px; color: #256d98; font-size: 26.460px; line-height: 36px; text-decoration: underline 2px; text-underline-offset: 3px; text-decoration-skip-ink: none; }
.download {
  box-sizing: border-box;
  width: 43px;
  height: 44px;
  margin: 0 41px 0 auto;
  display: flex;
  align-items: center;
  justify-content: center;
  background: #fff;
  border: 2px solid #ccc;
  border-radius: 4px;
}
.actions { margin: 55px 28px 0 0; display: flex; justify-content: flex-end; gap: 7px; }
.btn { height: 51px; border-radius: 3px; line-height: 51px; text-align: center; }
.ok { width: 71px; background: #dadada; color: #333; }
.start { width: 153px; background: #303030; color: #fff; }

/* Page scrollbar */
.scrollbar { flex: none; width: 34px; display: flex; flex-direction: column; align-items: center; background: #f1f1f1; }
.arrow-up { margin-top: 13px; }
.thumb { width: 30px; height: 951px; margin-top: 12px; background: #c1c1c1; }
.arrow-down { margin: auto 0 13px; }

/* Taskbar */
.taskbar { flex: none; height: 79px; display: flex; background: #000307; color: #fff; }
.task { flex: none; box-sizing: border-box; width: 96px; height: 79px; display: flex; align-items: center; justify-content: center; }
.task.first { width: 94px; padding-right: 2px; }
.task.edge { margin-left: 6px; }
.task.edge ~ .task { margin-left: 2px; }
.task.run { background: linear-gradient(#76b9ed, #76b9ed) center bottom / 80px 4px no-repeat; }
.task.run.current { background: linear-gradient(#76b9ed, #76b9ed) center bottom / 96px 4px no-repeat #35363a; }
.tray { flex: none; margin-left: auto; display: flex; align-items: center; }
.t-caret { margin-left: 53px; }
.t-volume { margin-left: 35px; }
.t-battery { margin-left: 30px; }
.t-dropbox { margin-left: 34px; }
.t-wifi { margin: 5px 0 0 40px; }
.t-pen { margin-left: 41px; }
.lang { width: 47px; margin: 2px 0 0 36px; font-size: 23.200px; }
.clock { width: 132px; margin-left: 14px; padding-top: 1px; font-size: 23.100px; line-height: 37px; text-align: center; }
.t-note { margin-left: 26px; }
.peek { align-self: stretch; width: 8px; margin-left: 41px; box-sizing: border-box; border-left: 2px solid #555; }
</style>
